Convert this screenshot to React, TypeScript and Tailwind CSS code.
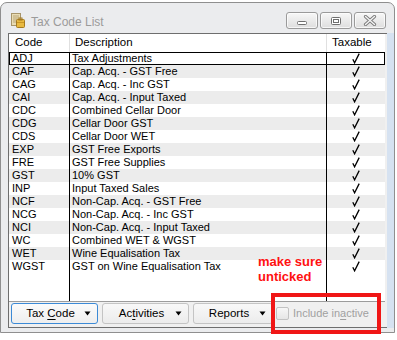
import React from "react";

const rows: [string, string][] = [
  ["ADJ", "Tax Adjustments"],
  ["CAF", "Cap. Acq. - GST Free"],
  ["CAG", "Cap. Acq. - Inc GST"],
  ["CAI", "Cap. Acq. - Input Taxed"],
  ["CDC", "Combined Cellar Door"],
  ["CDG", "Cellar Door GST"],
  ["CDS", "Cellar Door WET"],
  ["EXP", "GST Free Exports"],
  ["FRE", "GST Free Supplies"],
  ["GST", "10% GST"],
  ["INP", "Input Taxed Sales"],
  ["NCF", "Non-Cap. Acq. - GST Free"],
  ["NCG", "Non-Cap. Acq. - Inc GST"],
  ["NCI", "Non-Cap. Acq. - Input Taxed"],
  ["WC", "Combined WET & WGST"],
  ["WET", "Wine Equalisation Tax"],
  ["WGST", "GST on Wine Equalisation Tax"],
];

function Check() {
  return (
    <svg width="8" height="11" viewBox="0 0 8 11">
      <path d="M0.8 6.2 L2.6 9.8 L7.2 0.6" fill="none" stroke="#000" strokeWidth="1.3" strokeLinejoin="miter" />
    </svg>
  );
}

function Arrow() {
  return (
    <svg width="7" height="5" viewBox="0 0 7 5" className="shrink-0">
      <path d="M0.5 0.5 L6.5 0.5 L3.5 4.5 Z" fill="#000" />
    </svg>
  );
}

function TitleIcon() {
  return (
    <svg width="14" height="15" viewBox="0 0 14 15">
      <rect x="0.5" y="0.5" width="9" height="12" fill="#e9dcb4" stroke="#a8956a" />
      <path d="M2 3h6M2 5h6M2 7h4M2 9h3" stroke="#b9a576" strokeWidth="1" />
      <rect x="5.5" y="6.5" width="8" height="8" rx="1" fill="#e8b940" stroke="#a47a20" />
      <path d="M6 9.5h7" stroke="#c89526" />
      <rect x="8" y="5" width="3" height="2" fill="none" stroke="#a47a20" />
    </svg>
  );
}

function TitleBtn({ kind }: { kind: "min" | "max" | "close" }) {
  return (
    <div className="w-[32px] h-[17px] rounded-[3px] border border-[#9a9a9a] bg-gradient-to-b from-[#f7f7f7] to-[#dedede] flex items-center justify-center shadow-[inset_0_0_0_1px_rgba(255,255,255,0.7)]">
      {kind === "min" && (
        <svg width="12" height="10" viewBox="0 0 12 10">
          <rect x="1.5" y="5.5" width="9" height="3" rx="1" fill="#fff" stroke="#6f6f6f" />
        </svg>
      )}
      {kind === "max" && (
        <svg width="12" height="10" viewBox="0 0 12 10">
          <rect x="1.5" y="1.5" width="9" height="7" rx="1" fill="#fff" stroke="#6f6f6f" />
          <rect x="3.5" y="3.5" width="5" height="3" fill="none" stroke="#6f6f6f" />
        </svg>
      )}
      {kind === "close" && (
        <svg width="14" height="11" viewBox="0 0 14 11">
          <path d="M2.5 1.5 L11.5 9.5 M11.5 1.5 L2.5 9.5" stroke="#7a7a7a" strokeWidth="3.2" strokeLinecap="round" />
          <path d="M2.5 1.5 L11.5 9.5 M11.5 1.5 L2.5 9.5" stroke="#f4f4f4" strokeWidth="1.4" strokeLinecap="round" />
        </svg>
      )}
    </div>
  );
}

function DropBtn({ w, label, focused }: { w: string; label: React.ReactNode; focused?: boolean }) {
  return (
    <div
      className={`${w} h-[21px] rounded-[3px] border flex items-center ${
        focused
          ? "border-[#3c8ad6] bg-gradient-to-b from-[#fbfbfb] to-[#eeeeee]"
          : "border-[#c4c4c4] bg-gradient-to-b from-[#f8f8f8] to-[#ececec]"
      }`}
    >
      <span className="flex-1 text-center pl-[5px] text-[11.5px] leading-none text-black">{label}</span>
      <span className="mr-[6px] flex items-center">
        <Arrow />
      </span>
    </div>
  );
}

export default function App() {
  return (
    <div className="relative w-[397px] h-[340px] bg-white overflow-hidden font-['Liberation_Sans',Arial,sans-serif]">
      <div className="pt-[2px]">
        <div className="w-[395px] h-[331px] rounded-t-[7px] border border-[#8f8f8f] bg-[#ebecee] flex flex-col">
          {/* Title bar */}
          <div className="h-[30px] flex items-start shrink-0">
            <div className="ml-[10px] mt-[10px]">
              <TitleIcon />
            </div>
            <div className="ml-[6px] mt-[12px] text-[12px] leading-[14px] text-[#9b9b9b]">Tax Code List</div>
            <div className="flex-1" />
            <div className="mt-[9px] mr-[8px] flex gap-[2px]">
              <TitleBtn kind="min" />
              <TitleBtn kind="max" />
              <TitleBtn kind="close" />
            </div>
          </div>

          {/* Body */}
          <div className="flex flex-1">
            <div className="w-[7px]" />
            <div className="w-[379px] border-l border-t border-b border-[#6e6e6e] bg-[#f0f0f0] flex flex-col">
              {/* List */}
              <div className="w-[376px] bg-white flex flex-col border-b border-[#9c9c9c]">
                <div className="flex h-[18px] text-[11.5px] text-black items-center">
                  <div className="w-[61px] h-full border-r border-[#e0e0e0] pl-[6px] flex items-center">Code</div>
                  <div className="w-[257px] h-full border-r border-[#e0e0e0] pl-[5px] flex items-center">Description</div>
                  <div className="flex-1 h-full pl-[5px] flex items-center">Taxable</div>
                </div>
                {rows.map(([c, d], i) => (
                  <div
                    key={c}
                    className={`flex h-[13px] text-[11px] leading-[13px] text-black ${
                      i % 2 === 1 ? "bg-[#ececec]" : "bg-white"
                    } ${i === 0 ? "outline outline-1 outline-black -outline-offset-1" : ""}`}
                  >
                    <div className="w-[61px] border-r border-black pl-[3px] whitespace-nowrap overflow-hidden">{c}</div>
                    <div className="w-[257px] border-r border-black pl-[2px] whitespace-nowrap overflow-hidden">{d}</div>
                    <div className="flex-1 flex justify-center items-center">
                      <Check />
                    </div>
                  </div>
                ))}
                <div className="flex h-[28px]">
                  <div className="w-[61px] border-r border-black" />
                  <div className="w-[257px] border-r border-black" />
                  <div className="flex-1" />
                </div>
              </div>

              {/* Button row */}
              <div className="flex items-start pt-[1px] pl-[2px] gap-[4px]">
                <DropBtn
                  w="w-[87px]"
                  focused
                  label={
                    <>
                      Tax <span className="underline underline-offset-2">C</span>ode
                    </>
                  }
                />
                <DropBtn
                  w="w-[87px]"
                  label={
                    <>
                      Ac<span className="underline underline-offset-2">t</span>ivities
                    </>
                  }
                />
                <DropBtn w="w-[80px]" label="Reports" />
                <div className="flex items-center h-[21px] ml-[-1px] gap-[4px]">
                  <div className="w-[13px] h-[13px] rounded-[2px] border border-[#c2c2c2] bg-gradient-to-b from-[#f6f6f6] to-[#e6e6e6]" />
                  <span className="text-[11px] text-[#a0a0a0] leading-none">
                    Include in<span className="underline underline-offset-2">a</span>ctive
                  </span>
                </div>
              </div>
            </div>
            <div className="flex-1 bg-[#d6e2f1]" />
          </div>
          <div className="h-[4px] shrink-0" />
        </div>
      </div>

      {/* Annotations */}
      <div className="absolute left-[258px] top-[254px] text-[13px] leading-[15px] font-bold text-[#ff1111]">
        <div>make sure</div>
        <div>unticked</div>
      </div>
      <div className="absolute left-[271px] top-[293px] w-[110px] h-[41px] border-[4px] border-[#f01616]" />
    </div>
  );
}
